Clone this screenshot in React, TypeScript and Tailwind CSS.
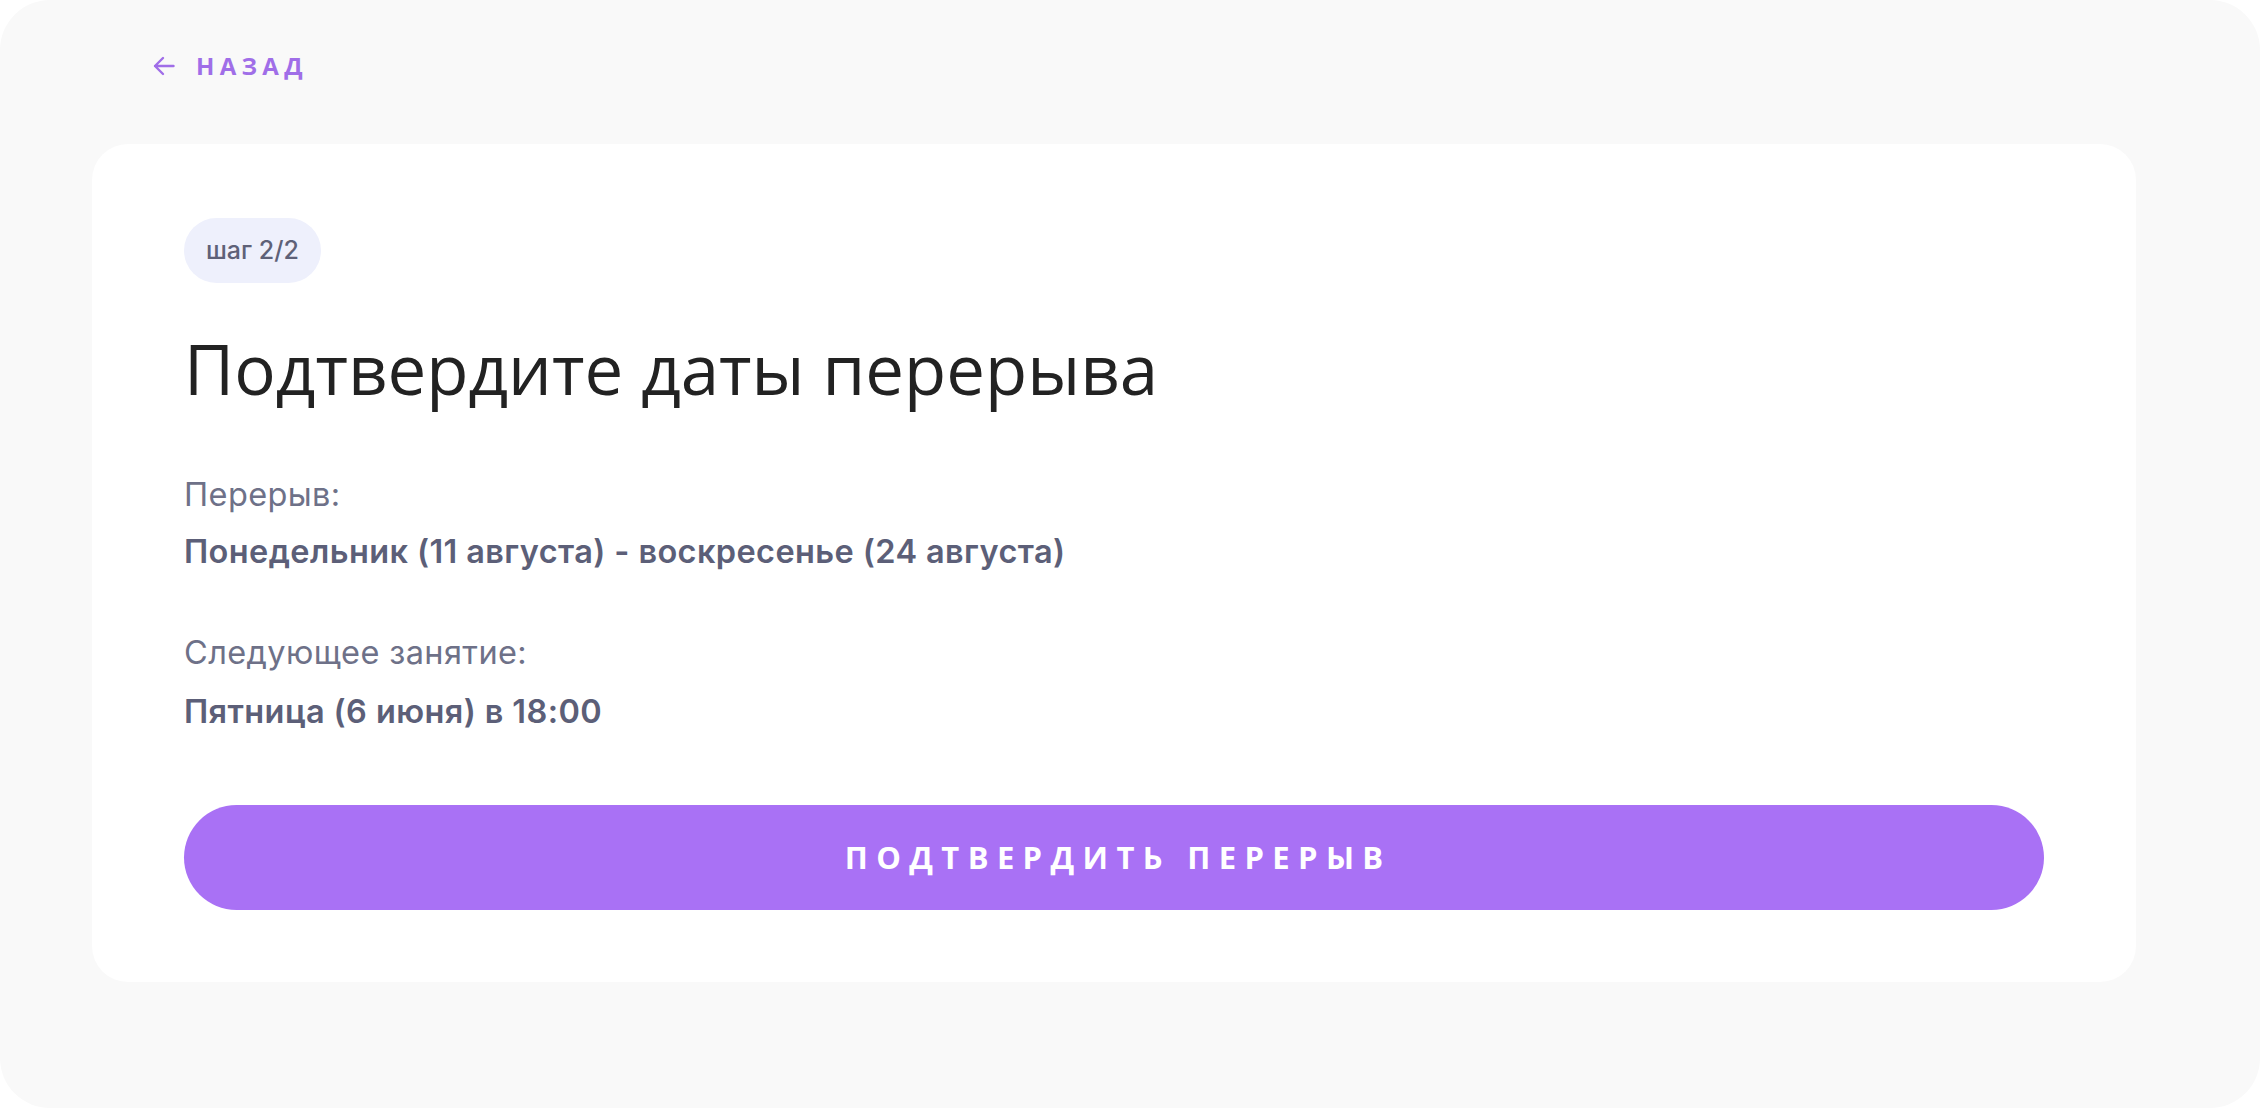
export default function App() {
  return (
    <div className="w-full h-[1108px] bg-white">
      <div className="h-full rounded-[50px] bg-[#f9f9f9] px-[92px] pt-[50px]">
        {/* назад */}
        <a
          href="#"
          className="ml-[61px] flex h-[32px] w-fit items-center gap-[21px] text-[#a06ee8] font-['Open_Sans',sans-serif] text-[24px] font-bold tracking-[0.22em] leading-none"
        >
          <svg width="22" height="20" viewBox="0 0 22 20" fill="none" stroke="currentColor" strokeWidth="2.4" strokeLinecap="round" strokeLinejoin="round">
            <path d="M20.5 10H2M10 2L2 10L10 18" />
          </svg>
          <span>НАЗАД</span>
        </a>

        <div className="mt-[62px] h-[838px] w-[2044px] rounded-[36px] bg-white px-[92px] pt-[74px]">
          <div className="inline-flex h-[65px] items-center rounded-full bg-[#eef0fc] px-[22px] font-['Inter',sans-serif] text-[25px] font-medium text-[#5e6178]">
            шаг 2/2
          </div>

          <h1 className="mt-[51px] font-['Open_Sans',sans-serif] text-[69px] leading-[69px] font-normal text-[#222222]">
            Подтвердите даты перерыва
          </h1>

          <div className="font-['Inter',sans-serif] text-[32.5px] leading-[31px] tracking-[0.012em]">
            <p className="mt-[76px] text-[#6e7188]">Перерыв:</p>
            <p className="mt-[26px] font-semibold text-[#5c5f78]">
              Понедельник (11 августа) - воскресенье (24 августа)
            </p>
            <p className="mt-[70px] text-[#6e7188]">Следующее занятие:</p>
            <p className="mt-[28px] font-semibold text-[#5c5f78]">Пятница (6 июня) в 18:00</p>
          </div>

          <button className="mt-[78px] flex h-[105px] w-full items-center justify-center rounded-full bg-[#a971f5] pl-[0.27em] font-['Open_Sans',sans-serif] text-[31px] font-bold tracking-[0.27em] text-white">
            ПОДТВЕРДИТЬ ПЕРЕРЫВ
          </button>
        </div>
      </div>
    </div>
  );
}
